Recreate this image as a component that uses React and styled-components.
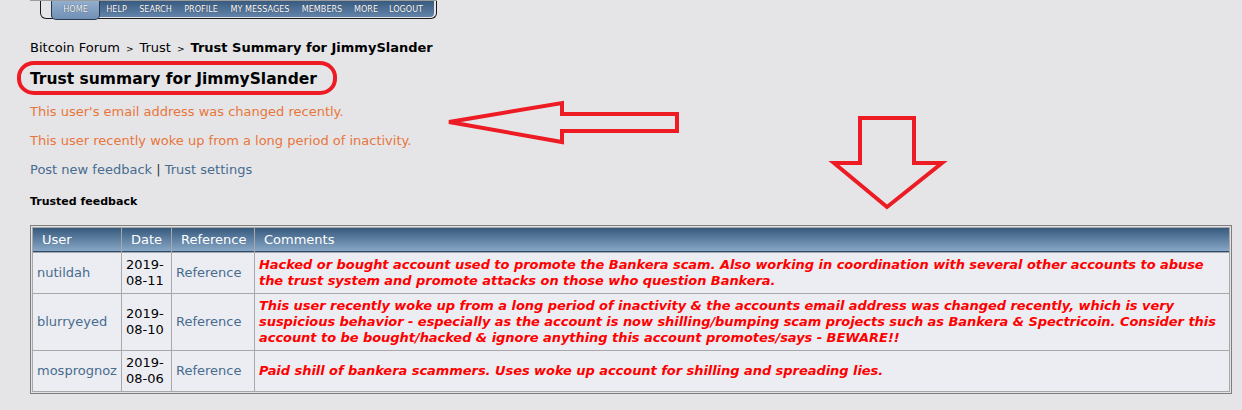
import React from "react";
import styled, { createGlobalStyle } from "styled-components";

const GlobalStyle = createGlobalStyle`
  body {
    margin: 0;
    background: #e5e5e8;
    font-family: "DejaVu Sans", Verdana, sans-serif;
    font-size: 13px;
    color: #000;
  }
`;

const Page = styled.div`
  position: relative;
  padding: 0 10px 16px 30px;
  min-height: 410px;
  box-sizing: border-box;
`;

const HeaderLine = styled.div`
  width: 407px;
  height: 1px;
  background: #9c9c9c;
`;

const Nav = styled.div`
  margin-left: 10px;
  width: 397px;
  height: 18px;
  box-sizing: border-box;
  border: 1px solid #1a1a1a;
  border-top: none;
  border-radius: 0 0 6px 6px;
  padding: 0 2px 2px 10px;
  display: flex;
`;

const Bar = styled.div`
  flex: 1;
  display: flex;
  align-items: flex-start;
  background: linear-gradient(#3a5b80, #6384aa);
  border-radius: 0 0 4px 0;
  height: 16px;
`;

const NavItem = styled.a`
  font-family: "DejaVu Sans Condensed", "DejaVu Sans", sans-serif;
  font-size: 9px;
  color: #fff;
  text-shadow: 0 0 1px #1c2a3c;
  line-height: 16px;
  text-decoration: none;
  height: ${(p) => (p.$active ? "19px" : "16px")};
  box-sizing: border-box;
  background: ${(p) => (p.$active ? "linear-gradient(#92aecd, #7090b5)" : "transparent")};
  border: ${(p) => (p.$active ? "1px solid #2a3a50" : "none")};
  border-top: none;
  border-radius: ${(p) => (p.$active ? "0 0 5px 5px" : "0")};
  width: ${(p) => p.$w}px;
  text-align: center;
  white-space: nowrap;
`;

const Crumbs = styled.div`
  margin-top: 21px;
  line-height: 16px;
`;

const Sep = styled.span`
  font-size: 9px;
  margin: 0 6px;
`;

const Title = styled.h2`
  margin: 13px 0 0;
  font-size: 15.5px;
  line-height: 18px;
  font-weight: bold;
`;

const Notice = styled.p`
  margin: ${(p) => (p.$first ? "16px" : "13px")} 0 0;
  line-height: 16px;
  color: #e8753a;
`;

const Links = styled.p`
  margin: 13px 0 0;
  line-height: 16px;
  color: #333;
`;

const Link = styled.a`
  color: #476c8e;
  text-decoration: none;
`;

const SubHead = styled.h4`
  margin: 17px 0 0;
  font-size: 11px;
  line-height: 14px;
  font-weight: bold;
`;

const TableWrap = styled.div`
  margin-top: 16px;
  border: 1px solid #7e7e7e;
  padding: 1px;
  background: #e3e3e6;
`;

const Table = styled.table`
  width: 100%;
  table-layout: fixed;
  border-collapse: separate;
  border-spacing: 1px;
  background: #a8a8a8;
`;

const Th = styled.th`
  box-sizing: border-box;
  width: ${(p) => (p.$w ? `${p.$w}px` : "auto")};
  text-align: left;
  font-weight: normal;
  color: #fff;
  height: 24px;
  padding: 0 9px;
  background: linear-gradient(#365a7e, #88a7c6);
  border-bottom: 1px solid #2c4a69;
  white-space: nowrap;
`;

const Td = styled.td`
  background: #ecedf3;
  padding: 4px;
  line-height: 16px;
  vertical-align: middle;
`;

const Comment = styled(Td)`
  color: #ff0000;
  font-weight: bold;
  font-style: italic;
  letter-spacing: -0.05px;
`;

const Overlay = styled.svg`
  position: absolute;
  left: 0;
  top: 0;
  pointer-events: none;
`;

const navItems = [
  ["HOME", 49],
  ["HELP", 33],
  ["SEARCH", 45],
  ["PROFILE", 46],
  ["MY MESSAGES", 72],
  ["MEMBERS", 52],
  ["MORE", 36],
  ["LOGOUT", 44],
];

const rows = [
  {
    user: "nutildah",
    date: "2019-08-11",
    text:
      "Hacked or bought account used to promote the Bankera scam. Also working in coordination with several other accounts to abuse the trust system and promote attacks on those who question Bankera.",
  },
  {
    user: "blurryeyed",
    date: "2019-08-10",
    text:
      "This user recently woke up from a long period of inactivity & the accounts email address was changed recently, which is very suspicious behavior - especially as the account is now shilling/bumping scam projects such as Bankera & Spectricoin. Consider this account to be bought/hacked & ignore anything this account promotes/says - BEWARE!!",
  },
  {
    user: "mosprognoz",
    date: "2019-08-06",
    text: "Paid shill of bankera scammers. Uses woke up account for shilling and spreading lies.",
  },
];

export default function App() {
  return (
    <>
      <GlobalStyle />
      <Page>
        <HeaderLine />
        <Nav>
          <Bar>
            {navItems.map(([label, w], i) => (
              <NavItem key={label} $active={i === 0} $w={w} href="#">
                {label}
              </NavItem>
            ))}
          </Bar>
        </Nav>

        <Crumbs>
          Bitcoin Forum<Sep>&gt;</Sep>Trust<Sep>&gt;</Sep>
          <b>Trust Summary for JimmySlander</b>
        </Crumbs>
        <Title>Trust summary for JimmySlander</Title>
        <Notice $first>This user's email address was changed recently.</Notice>
        <Notice>This user recently woke up from a long period of inactivity.</Notice>
        <Links>
          <Link href="#">Post new feedback</Link> | <Link href="#">Trust settings</Link>
        </Links>
        <SubHead>Trusted feedback</SubHead>

        <TableWrap>
          <Table>
            <thead>
              <tr>
                <Th $w={88}>User</Th>
                <Th $w={49}>Date</Th>
                <Th $w={82}>Reference</Th>
                <Th>Comments</Th>
              </tr>
            </thead>
            <tbody>
              {rows.map((r) => (
                <tr key={r.user}>
                  <Td>
                    <Link href="#">{r.user}</Link>
                  </Td>
                  <Td>{r.date}</Td>
                  <Td>
                    <Link href="#">Reference</Link>
                  </Td>
                  <Comment>{r.text}</Comment>
                </tr>
              ))}
            </tbody>
          </Table>
        </TableWrap>

        <Overlay width="1242" height="410" viewBox="0 0 1242 410">
          <g fill="none" stroke="#ed1c24" strokeWidth="4" strokeLinejoin="miter">
            <rect x="19" y="63" width="316" height="30" rx="15" ry="14" />
            <polygon points="449,122 562,103 562,114 677,114 677,131 562,131 562,142" />
            <polygon points="860,118 914,118 914,163 942,163 887,207 834,163 860,163" />
          </g>
        </Overlay>
      </Page>
    </>
  );
}
